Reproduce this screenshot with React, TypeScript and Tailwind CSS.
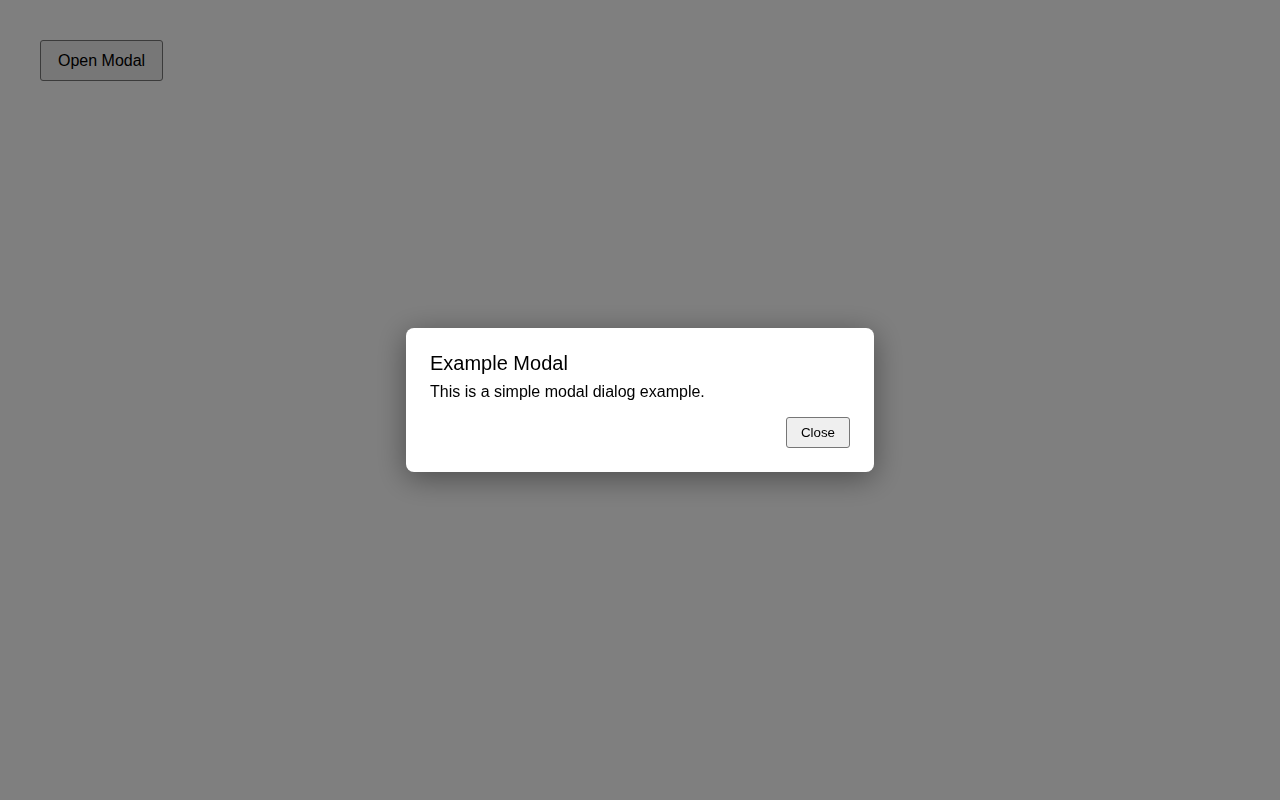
import React from "react";

export default function App() {
  return (
    <div
      className="relative min-h-[800px] w-full bg-white p-[40px] text-black"
      style={{ fontFamily: '"Liberation Sans", Arial, sans-serif' }}
    >
      <button className="rounded-[3px] border border-[#767676] bg-[#efefef] px-[17px] py-[7.5px] text-[16px] leading-[24px] text-black">
        Open Modal
      </button>

      <div className="fixed inset-0 flex items-center justify-center bg-[rgba(0,0,0,0.5)]">
        <div className="w-[468px] rounded-[8px] bg-white p-[24px] shadow-[0_6px_30px_rgba(0,0,0,0.4)]">
          <h2 className="text-[20px] leading-[23px] font-normal">Example Modal</h2>
          <p className="mt-[5px] text-[16px] leading-[24px]">
            This is a simple modal dialog example.
          </p>
          <div className="mt-[13px] flex justify-end">
            <button className="rounded-[3px] border border-[#767676] bg-[#efefef] px-[14px] py-[4.5px] text-[13.33px] leading-[20px] text-black">
              Close
            </button>
          </div>
        </div>
      </div>
    </div>
  );
}
